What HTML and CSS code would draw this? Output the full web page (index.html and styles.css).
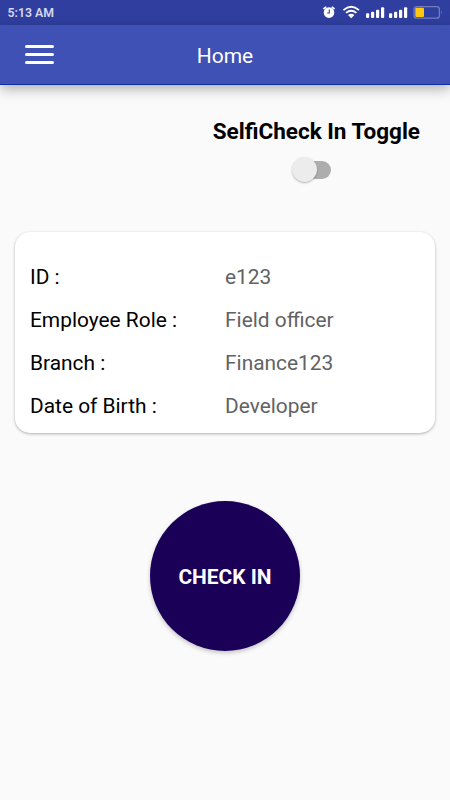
FILE: index.html
```html
<!DOCTYPE html>
<html lang="en">
<head>
  <meta charset="UTF-8" />
  <meta name="viewport" content="width=device-width, initial-scale=1" />
  <title>Home</title>
  <link rel="stylesheet" href="styles.css">
</head>
<body>
  <div class="status-bar">
    <span class="time">5:13 AM</span>
    <svg class="status-icons" width="124" height="18" viewBox="0 0 124 18">
      <!-- alarm -->
      <circle cx="9" cy="9.6" r="5.3" fill="#fff" />
      <path d="M3.9 5.6 5.7 4.3M14.1 5.6 12.3 4.3" stroke="#fff" stroke-width="1.7" stroke-linecap="round" />
      <path d="M9.3 6.6V10H7.2" fill="none" stroke="#303f9f" stroke-width="1.1" />
      <!-- wifi -->
      <g fill="none" stroke="#fff" stroke-width="1.8">
        <path d="M23.4 7.1Q31.2 .5 39 7.1" />
        <path d="M26 9.9Q31.2 5.6 36.4 9.9" />
      </g>
      <path d="M28 12Q31.2 9.4 34.4 12L31.2 15.2Z" fill="#fff" />
      <!-- signal -->
      <g fill="#fff">
        <rect x="46" y="10.2" width="3.2" height="4.8" rx="1" />
        <rect x="51" y="8.8" width="3.2" height="6.2" rx="1" />
        <rect x="56" y="6.8" width="3.2" height="8.2" rx="1" />
        <rect x="61" y="4.2" width="3.2" height="10.8" rx="1" />
        <rect x="69" y="10.2" width="3.2" height="4.8" rx="1" />
        <rect x="74" y="8.8" width="3.2" height="6.2" rx="1" />
        <rect x="79" y="6.8" width="3.2" height="8.2" rx="1" />
        <rect x="84" y="4.2" width="3.2" height="10.8" rx="1" />
      </g>
      <!-- battery -->
      <rect x="94" y="3.6" width="25.4" height="11.6" rx="2.8" fill="none" stroke="#727cbd" stroke-width="1.3" />
      <path d="M121 7.2Q122.8 9.4 121 11.6Z" fill="#727cbd" />
      <rect x="95.3" y="4.8" width="8.7" height="9.2" rx="1" fill="#ffc810" />
    </svg>
  </div>

  <header class="toolbar">
    <div class="menu">
      <span></span>
      <span></span>
      <span></span>
    </div>
    <h1>Home</h1>
  </header>

  <main>
    <div class="selfie">
      <h2>SelfiCheck In Toggle</h2>
      <div class="switch"><div class="thumb"></div></div>
    </div>

    <div class="card">
      <div class="label">ID :</div>
      <div class="value">e123</div>
      <div class="label">Employee Role :</div>
      <div class="value">Field officer</div>
      <div class="label">Branch :</div>
      <div class="value">Finance123</div>
      <div class="label">Date of Birth :</div>
      <div class="value">Developer</div>
    </div>

    <button class="check-in" type="button">CHECK IN</button>
  </main>
</body>
</html>
```

FILE: styles.css
```css
* {
  box-sizing: border-box;
}
body {
  margin: 0;
  min-height: 800px;
  font-family: Roboto, "Liberation Sans", sans-serif;
  background: #fafafa;
  color: #000;
}
h1, h2 {
  margin: 0;
}
.status-bar {
  display: flex;
  justify-content: space-between;
  height: 25px;
  padding: 3px 6px 0 7.5px;
  background: #303f9f;
}
.time {
  font-size: 12.3px;
  font-weight: 600;
  line-height: 20px;
  color: #d5d9ee;
}
.toolbar {
  display: grid;
  grid-template-columns: 54px 1fr 54px;
  align-items: center;
  height: 60px;
  background: #3f51b5;
  border-bottom: 1px solid #0d2fae;
  box-shadow: 0 4px 12px rgba(0,0,0,0.3);
}
.menu {
  display: flex;
  flex-direction: column;
  gap: 4.6px;
  margin-left: 25px;
}
.menu span {
  height: 3px;
  border-radius: 1.5px;
  background: #fff;
}
.toolbar h1 {
  padding-top: 2px;
  text-align: center;
  font-size: 21px;
  font-weight: 400;
  color: #fff;
}
main {
  display: flex;
  flex-direction: column;
  padding: 31px 15px 0;
}
.selfie {
  display: flex;
  flex-direction: column;
  align-items: flex-end;
  padding-right: 15px;
}
.selfie h2 {
  font-size: 22.5px;
  line-height: 30px;
  font-weight: 700;
}
.switch {
  width: 38px;
  height: 18px;
  margin: 15px 89px 0 0;
  border-radius: 9px;
  background: #adadad;
}
.thumb {
  width: 25px;
  height: 25px;
  margin: -4px 0 0 -1.5px;
  border-radius: 50%;
  background: #ececec;
  box-shadow: 0 1px 2px rgba(0,0,0,0.28);
}
.card {
  display: grid;
  grid-template-columns: 195px 1fr;
  grid-auto-rows: 43px;
  align-items: center;
  height: 201px;
  margin-top: 53px;
  padding: 23px 15px 0;
  border-radius: 15px;
  background: #fff;
  box-shadow: 0 1px 3px rgba(0,0,0,0.3);
  font-size: 20.9px;
}
.value {
  color: #626262;
}
.check-in {
  align-self: center;
  width: 150px;
  height: 150px;
  margin-top: 68px;
  padding: 1px 0 0;
  border: none;
  border-radius: 50%;
  background: #1b0057;
  box-shadow: 0 2px 4px rgba(0,0,0,0.22);
  color: #fff;
  font-family: inherit;
  font-size: 20.9px;
  font-weight: 700;
}
```
